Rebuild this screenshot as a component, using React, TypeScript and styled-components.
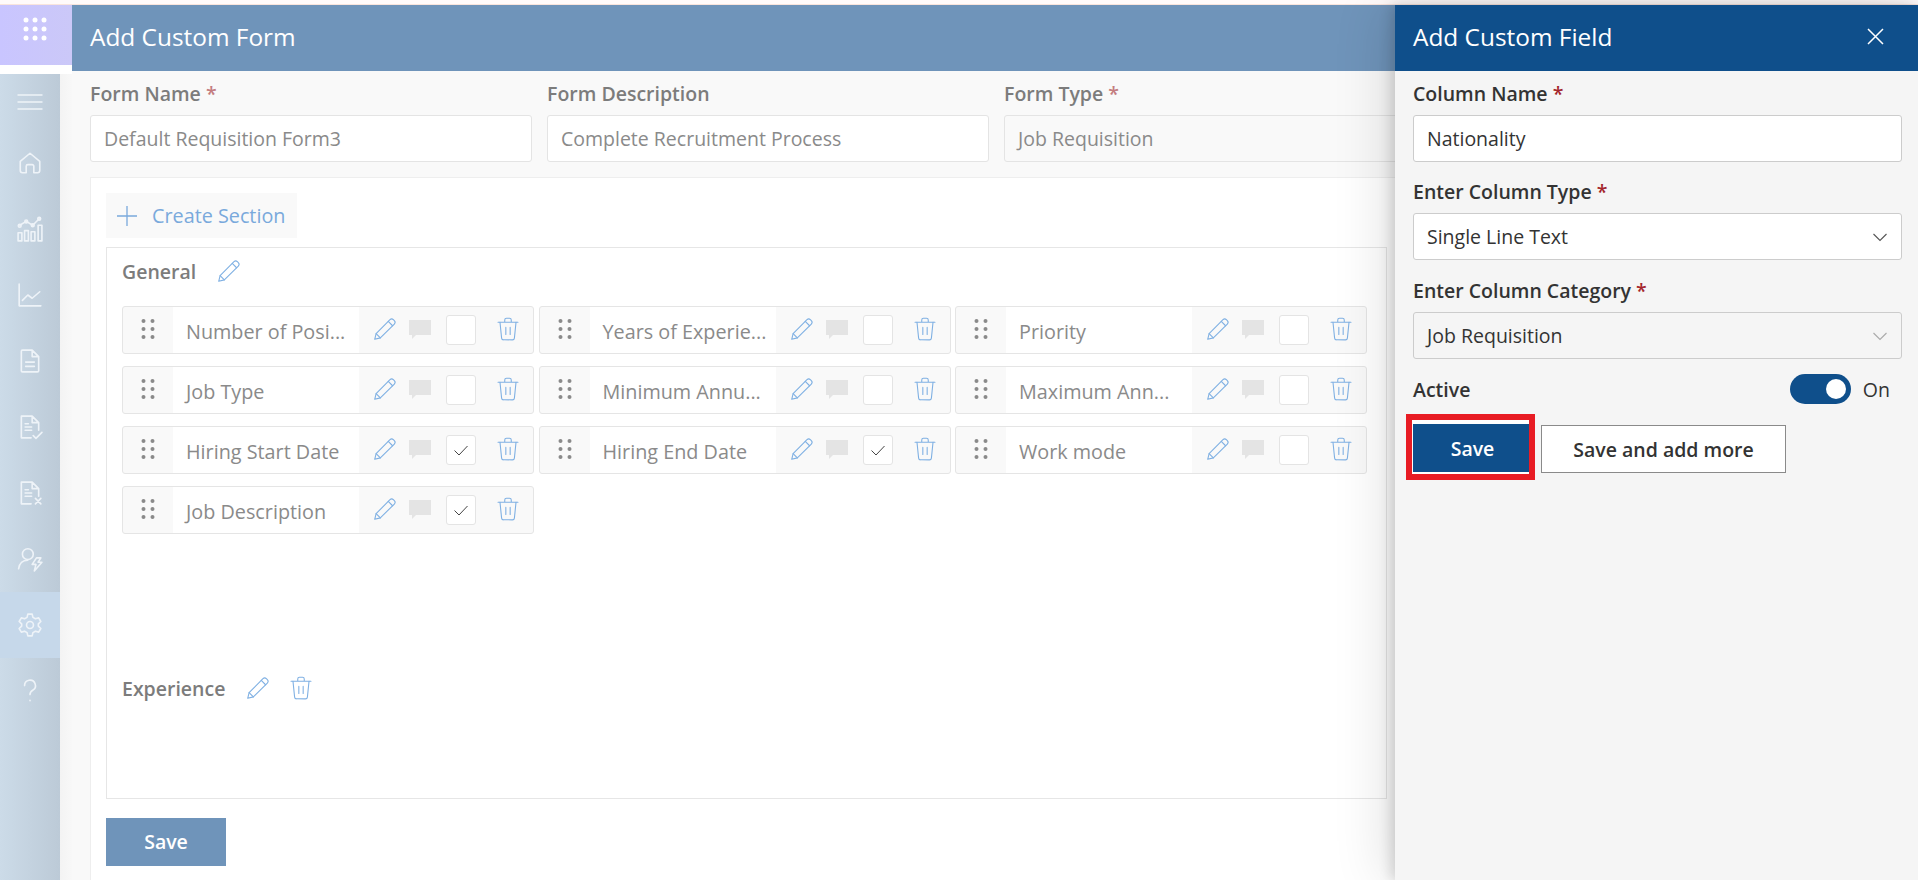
import styled, { createGlobalStyle } from "styled-components";
import { ReactNode } from "react";

const GlobalStyle = createGlobalStyle`
  html, body {
    margin: 0;
    padding: 0;
    background: #fff;
  }
  * {
    box-sizing: border-box;
  }
`;

const Page = styled.div`
  position: relative;
  width: 1918px;
  height: 880px;
  overflow: hidden;
  display: flex;
  flex-direction: column;
  font-family: "Open Sans", "Noto Sans", sans-serif;
`;
const TopStrip = styled.div`
  height: 5px;
  flex: none;
  background: #fffafa;
  border-bottom: 1px solid #f9e4dc;
`;
const Body = styled.div`
  flex: 1;
  display: flex;
  min-height: 0;
`;
const Sidebar = styled.aside`
  width: 72px;
  flex: none;
  display: flex;
  flex-direction: column;
`;
const Logo = styled.div`
  height: 60px;
  flex: none;
  display: flex;
  justify-content: center;
  padding: 12px 2px 0 0;
  background: linear-gradient(90deg, #c9c5ff, #cbc8f8);
`;
const RailWrap = styled.div`
  flex: 1;
  margin-top: 9px;
  display: flex;
  background: linear-gradient(90deg, #dcdcdc, #f8f8f8);
`;
const Rail = styled.nav`
  width: 60px;
  background: linear-gradient(90deg, #ccdbe8, #bccad7);
  display: flex;
  flex-direction: column;
`;
const RailItem = styled.div<{ $active?: boolean; $short?: boolean }>`
  height: ${(props) => (props.$short ? "56px" : "66px")};
  display: flex;
  align-items: center;
  justify-content: center;
  color: #eef3f8;
  background: ${(props) => (props.$active ? "#c6d8ea" : "transparent")};
`;
const Main = styled.main`
  flex: 1;
  min-width: 0;
  background: #f9f9f9;
  display: flex;
  flex-direction: column;
`;
const TitleBar = styled.header`
  height: 66px;
  flex: none;
  background: #6f94ba;
  color: #fff;
  font-size: 24.4px;
  display: flex;
  align-items: center;
  padding: 0 0 4px 18px;
`;
const FormTop = styled.div`
  display: grid;
  grid-template-columns: repeat(3, 442px);
  column-gap: 15px;
  padding: 11px 0 0 18px;
`;
const Label = styled.label<{ $dark?: boolean }>`
  display: block;
  font-size: 19.5px;
  line-height: 24px;
  font-weight: 600;
  color: ${(props) => (props.$dark ? "#333" : "#7c7c7c")};
  margin-bottom: 9px;
`;
const Req = styled.span<{ $dark?: boolean }>`
  color: ${(props) => (props.$dark ? "#a4262c" : "#c47d80")};
`;
const Field = styled.div<{ $dark?: boolean; $flat?: boolean }>`
  height: 47px;
  display: flex;
  align-items: center;
  justify-content: space-between;
  padding: 0 13px;
  background: ${(props) => (props.$flat ? "transparent" : "#fff")};
  border: 1px solid ${(props) => (props.$dark ? "#ccc" : "#e4e4e4")};
  border-radius: 3px;
  font-size: 19.5px;
  color: ${(props) => (props.$dark ? "#333" : "#8a8a8a")};
`;
const Card = styled.section`
  flex: 1;
  margin: 15px 0 0 18px;
  padding: 15px 15px 0;
  background: #fff;
  border: 1px solid #eee;
  border-bottom: none;
`;
const CreateButton = styled.div`
  width: 191px;
  height: 45px;
  background: #f9f9f9;
  display: flex;
  align-items: center;
  gap: 15px;
  padding-left: 11px;
  color: #7aa9dc;
  font-size: 19.8px;
`;
const SectionBox = styled.div`
  width: 1281px;
  height: 552px;
  margin-top: 9px;
  padding: 0 15px;
  border: 1px solid #e6e6e6;
`;
const SectionHead = styled.div`
  height: 46px;
  display: flex;
  align-items: center;
  gap: 20px;
  color: #7c7c7c;
  font-size: 19.5px;
  font-weight: 600;
`;
const HeadIcon = styled.span<{ $pull?: boolean }>`
  display: flex;
  color: #7fb0e3;
  margin-left: ${(props) => (props.$pull ? "-3px" : "0")};
`;
const RowGrid = styled.div`
  display: grid;
  grid-template-columns: repeat(3, 412px);
  column-gap: 4.5px;
  row-gap: 12px;
  margin-top: 12px;
  height: 359px;
  align-content: start;
`;
const Row = styled.div`
  height: 48px;
  display: flex;
  align-items: center;
  background: #f9f9f9;
  border: 1px solid #e5e5e5;
  border-radius: 3px;
`;
const Handle = styled.div`
  width: 50px;
  height: 100%;
  flex: none;
  display: flex;
  align-items: center;
  justify-content: center;
  padding-bottom: 2px;
  color: #8a8a8a;
`;
const FieldName = styled.div`
  width: 186px;
  height: 100%;
  flex: none;
  display: flex;
  align-items: center;
  padding: 2px 0 0 13px;
  background: #fff;
  color: #8a8a8a;
  font-size: 19.8px;
  white-space: nowrap;
`;
const Actions = styled.div`
  flex: 1;
  display: flex;
  align-items: center;
  padding: 0 0 2px 13px;
  color: #7fb0e3;
`;
const CommentSlot = styled.span`
  display: flex;
  margin: 2px 0 0 11px;
`;
const Check = styled.div`
  width: 30px;
  height: 30px;
  margin: 2px 19px 0 15px;
  display: flex;
  align-items: center;
  justify-content: center;
  background: #fff;
  border: 1px solid #e4e4e4;
  border-radius: 3px;
  color: #444;
`;
const SaveMain = styled.div`
  width: 120px;
  height: 48px;
  margin-top: 19px;
  padding-bottom: 2px;
  display: flex;
  align-items: center;
  justify-content: center;
  background: #6f94ba;
  color: #fff;
  font-size: 19.5px;
  font-weight: 600;
`;
const Panel = styled.aside`
  position: absolute;
  top: 5px;
  right: 0;
  bottom: 0;
  width: 523px;
  display: flex;
  flex-direction: column;
  background: #f5f5f5;
  box-shadow: -4px 0 12px rgba(0, 0, 0, 0.14), -10px 0 50px rgba(0, 0, 0, 0.12);
`;
const PanelHead = styled.header`
  height: 66px;
  flex: none;
  display: flex;
  align-items: center;
  justify-content: space-between;
  padding: 0 34px 4px 18px;
  background: #0f4f8b;
  color: #fff;
  font-size: 24.4px;
`;
const PanelBody = styled.div`
  padding: 11px 16px 0 18px;
  display: flex;
  flex-direction: column;
`;
const PanelGroup = styled.div<{ $tight?: boolean }>`
  margin-bottom: ${(props) => (props.$tight ? "18px" : "19px")};
`;
const ActiveRow = styled.div`
  display: flex;
  align-items: center;
  justify-content: space-between;
  height: 30px;
  margin-top: -4px;
  font-size: 19.5px;
  font-weight: 600;
  color: #333;
`;
const ToggleWrap = styled.div`
  display: flex;
  align-items: center;
  gap: 12px;
  padding-right: 12px;
  font-size: 19.5px;
  font-weight: 400;
`;
const Toggle = styled.div`
  width: 61px;
  height: 30px;
  padding: 0 5px;
  display: flex;
  align-items: center;
  justify-content: flex-end;
  background: #0f4f8b;
  border-radius: 15px;
`;
const Knob = styled.div`
  width: 20px;
  height: 20px;
  border-radius: 50%;
  background: #fff;
`;
const ButtonRow = styled.div`
  display: flex;
  align-items: flex-start;
  margin: 10px 0 0 -7px;
`;
const Highlight = styled.div`
  border: 6px solid #e81c24;
  padding: 4px 0 2px 1px;
  background: #fff;
`;
const PrimaryButton = styled.div`
  width: 116px;
  height: 48px;
  padding-left: 3px;
  display: flex;
  align-items: center;
  justify-content: center;
  background: #0f4f8b;
  color: #fff;
  font-size: 19.5px;
  font-weight: 600;
`;
const SecondaryButton = styled.div`
  width: 245px;
  height: 48px;
  margin: 11px 0 0 6px;
  display: flex;
  align-items: center;
  justify-content: center;
  background: #fff;
  border: 1px solid #8a8a8a;
  color: #333;
  font-size: 19.5px;
  font-weight: 600;
`;

function Line({ size = 26, w = 1.5, children }: { size?: number; w?: number; children: ReactNode }) {
  return (
    <svg width={size} height={size} viewBox="0 0 24 24" fill="none" stroke="currentColor" strokeWidth={w} strokeLinecap="round" strokeLinejoin="round">
      {children}
    </svg>
  );
}
const Pencil = () => (
  <Line size={26} w={1}>
    <path d="M2.500 21.500l1.300-5.200L16.600 3.400a2.200 2.200 0 0 1 3.100 0l.9.9a2.200 2.200 0 0 1 0 3.100L7.700 20.200l-5.200 1.300z" />
    <path d="M15 5l4 4M3.800 16.300l3.900 3.900" />
  </Line>
);
const Trash = () => (
  <Line size={26} w={1}>
    <path d="M2.800 5.800h18.400M9 5.800V3.600A1.600 1.600 0 0 1 10.600 2h2.800A1.600 1.600 0 0 1 15 3.600v2.200" />
    <path d="M4.600 5.800l1.500 14.600A1.800 1.800 0 0 0 7.900 22h8.200a1.800 1.800 0 0 0 1.800-1.600l1.500-14.600M10 10.500v6.500M14 10.500v6.500" />
  </Line>
);
const Comment = () => (
  <svg width="22" height="20" viewBox="0 0 22 20">
    <path d="M0 0h22v15H7l-4 4v-4H0z" fill="#e4e4e4" />
  </svg>
);
const Tick = () => (
  <svg width="18" height="18" viewBox="0 0 18 18" fill="none" stroke="currentColor" strokeWidth="1">
    <path d="M2.500 9.500l4.500 4.500 8.500-9" />
  </svg>
);
const Chevron = ({ color }: { color: string }) => (
  <svg width="16" height="16" viewBox="0 0 16 16" fill="none" stroke={color} strokeWidth="1.100">
    <path d="M1.500 5l6.500 6.500L14.500 5" />
  </svg>
);
const Dots = () => (
  <svg width="14" height="20" viewBox="0 0 14 20" fill="currentColor">
    {[2, 10, 18].map((y) =>
      [2.5, 11.5].map((x) => <circle key={`${x}-${y}`} cx={x} cy={y} r="2" />)
    )}
  </svg>
);

const railIcons: ReactNode[] = [
  <path key="m" d="M1 5.500h22M1 12h22M1 18.500h22" />,
  <path key="h" d="M3 10.500L12 3l9 7.500V19a2 2 0 0 1-2 2h-3.500v-6a1.500 1.500 0 0 0-1.500-1.500h-4A1.500 1.500 0 0 0 8.500 15v6H5a2 2 0 0 1-2-2z" />,
  <g key="c">
    <path d="M1 15.500h3.500V23H1zM7 13.500h3.500V23H7zM13 14.500h3.500V23H13zM19.500 8.500H23V23h-3.500z" />
    <path d="M2.500 8.500L8.500 5l6 3.500 6-6" />
    <circle cx="2.500" cy="9" r="1.300" />
    <circle cx="8.500" cy="5" r="1.300" />
    <circle cx="14.500" cy="8.500" r="1.300" />
    <circle cx="20.500" cy="2.500" r="1.300" />
  </g>,
  <path key="t" d="M2 2v20h20M5 17l5-5 4 3 7-6" />,
  <path key="d" d="M5 2h9l6 6v13a1 1 0 0 1-1 1H5a1 1 0 0 1-1-1V3a1 1 0 0 1 1-1zM14 2v6h6M8 13h8M8 17h8" />,
  <path key="dc" d="M13 22H4V2h10l6 6v7M14 2v6h6M7.500 9h3M7.500 12h6M7.500 15h6M15 20l2.500 2.500L23 17" />,
  <path key="dx" d="M13 22H4V2h10l6 6v7M14 2v6h6M7.500 9h3M7.500 12h6M7.500 15h6M17 17l5 5M22 17l-5 5" />,
  <g key="u">
    <circle cx="10" cy="7.500" r="5" />
    <path d="M1.500 21c.5-5 4-8 8.500-8" />
    <path d="M18 11h4l-2.500 4H23l-7 8 1.500-6H14z" />
  </g>,
  <g key="g">
    <circle cx="12" cy="12" r="3.200" />
    <path d="M10 2h4l.7 3 2.300 1.300 3-.9 2 3.400-2.300 2.200v2l2.300 2.200-2 3.400-3-.9L14.700 19l-.7 3h-4l-.7-3L7 17.700l-3 .9-2-3.400L4.300 13v-2L2 8.800l2-3.400 3 .9L9.300 5z" />
  </g>,
  <path key="q" d="M7 7a5 5 0 1 1 7.500 4.300c-1.700 1-2.500 2-2.500 4M12 20.500v.5" />,
];

const rows = [
  { name: "Number of Posi...", checked: false },
  { name: "Years of Experie...", checked: false },
  { name: "Priority", checked: false },
  { name: "Job Type", checked: false },
  { name: "Minimum Annu...", checked: false },
  { name: "Maximum Ann...", checked: false },
  { name: "Hiring Start Date", checked: true },
  { name: "Hiring End Date", checked: true },
  { name: "Work mode", checked: false },
  { name: "Job Description", checked: true },
];

function App() {
  return (
    <Page>
      <GlobalStyle />
      <TopStrip />
      <Body>
        <Sidebar>
          <Logo>
            <svg width="24" height="24" viewBox="0 0 24 24" fill="#fff">
              {[3, 12, 21].map((y) =>
                [3, 12, 21].map((x) => <circle key={`${x}-${y}`} cx={x} cy={y} r="2.500" />)
              )}
            </svg>
          </Logo>
          <RailWrap>
            <Rail>
              {railIcons.map((icon, i) => (
                <RailItem key={i} $short={i === 0} $active={i === 8}>
                  <Line>{icon}</Line>
                </RailItem>
              ))}
            </Rail>
          </RailWrap>
        </Sidebar>
        <Main>
          <TitleBar>Add Custom Form</TitleBar>
          <FormTop>
            <div>
              <Label>
                Form Name <Req>*</Req>
              </Label>
              <Field>Default Requisition Form3</Field>
            </div>
            <div>
              <Label>Form Description</Label>
              <Field>Complete Recruitment Process</Field>
            </div>
            <div>
              <Label>
                Form Type <Req>*</Req>
              </Label>
              <Field $flat>Job Requisition</Field>
            </div>
          </FormTop>
          <Card>
            <CreateButton>
              <svg width="20" height="20" viewBox="0 0 20 20" stroke="currentColor" strokeWidth="1.300">
                <path d="M10 0v20M0 10h20" />
              </svg>
              Create Section
            </CreateButton>
            <SectionBox>
              <SectionHead>
                General
                <HeadIcon>
                  <Pencil />
                </HeadIcon>
              </SectionHead>
              <RowGrid>
                {rows.map((row) => (
                  <Row key={row.name}>
                    <Handle>
                      <Dots />
                    </Handle>
                    <FieldName>{row.name}</FieldName>
                    <Actions>
                      <Pencil />
                      <CommentSlot>
                        <Comment />
                      </CommentSlot>
                      <Check>{row.checked && <Tick />}</Check>
                      <Trash />
                    </Actions>
                  </Row>
                ))}
              </RowGrid>
              <SectionHead>
                Experience
                <HeadIcon>
                  <Pencil />
                </HeadIcon>
                <HeadIcon $pull>
                  <Trash />
                </HeadIcon>
              </SectionHead>
            </SectionBox>
            <SaveMain>Save</SaveMain>
          </Card>
        </Main>
      </Body>
      <Panel>
        <PanelHead>
          Add Custom Field
          <svg width="17" height="17" viewBox="0 0 17 17" stroke="#fff" strokeWidth="1.500">
            <path d="M1 1l15 15M16 1L1 16" />
          </svg>
        </PanelHead>
        <PanelBody>
          <PanelGroup $tight>
            <Label $dark>
              Column Name <Req $dark>*</Req>
            </Label>
            <Field $dark>Nationality</Field>
          </PanelGroup>
          <PanelGroup>
            <Label $dark>
              Enter Column Type <Req $dark>*</Req>
            </Label>
            <Field $dark>
              Single Line Text
              <Chevron color="#555" />
            </Field>
          </PanelGroup>
          <PanelGroup>
            <Label $dark>
              Enter Column Category <Req $dark>*</Req>
            </Label>
            <Field $dark $flat>
              Job Requisition
              <Chevron color="#aaa" />
            </Field>
          </PanelGroup>
          <ActiveRow>
            Active
            <ToggleWrap>
              <Toggle>
                <Knob />
              </Toggle>
              On
            </ToggleWrap>
          </ActiveRow>
          <ButtonRow>
            <Highlight>
              <PrimaryButton>Save</PrimaryButton>
            </Highlight>
            <SecondaryButton>Save and add more</SecondaryButton>
          </ButtonRow>
        </PanelBody>
      </Panel>
    </Page>
  );
}

export default App;
